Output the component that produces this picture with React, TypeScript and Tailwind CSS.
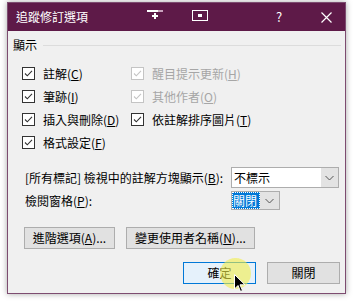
import React from "react";

const font = { fontFamily: '"Noto Sans CJK TC", "Noto Sans", sans-serif' };

function Box({ disabled }: { disabled?: boolean }) {
  const c = disabled ? "#c4c4c4" : "#333333";
  return (
    <svg width="13" height="13" viewBox="0 0 13 13" className="shrink-0">
      <rect x="0.5" y="0.5" width="12" height="12" fill="#ffffff" stroke={c} />
      <path d="M3 6.5 L5.3 8.8 L10 3.8" fill="none" stroke={c} strokeWidth="1.1" />
    </svg>
  );
}

function Check({
  label,
  mn,
  disabled,
}: {
  label: string;
  mn: string;
  disabled?: boolean;
}) {
  return (
    <div className="flex items-center h-[23px]">
      <Box disabled={disabled} />
      <span
        className={`ml-[8px] text-[12px] leading-[16px] whitespace-nowrap ${
          disabled ? "text-[#a6a6a6]" : "text-black"
        }`}
      >
        {label}(<span className="underline">{mn}</span>)
      </span>
    </div>
  );
}

function Chevron() {
  return (
    <svg width="9" height="6" viewBox="0 0 9 6">
      <path d="M0.5 1 L4.5 5 L8.5 1" fill="none" stroke="#555" strokeWidth="1" />
    </svg>
  );
}

function Btn({
  children,
  w,
  primary,
}: {
  children: React.ReactNode;
  w: string;
  primary?: boolean;
}) {
  return (
    <div
      className={`${w} h-[22px] flex items-center justify-center text-[12px] leading-[16px] border ${
        primary
          ? "bg-[#e5f1fb] border-[#0078d7]"
          : "bg-[#e1e1e1] border-[#adadad]"
      }`}
    >
      {children}
    </div>
  );
}

export default function App() {
  return (
    <div className="w-[354px] h-[302px] bg-white pl-[7px] pt-[2px] relative overflow-hidden" style={font}>
      <div className="w-[339px] border border-[#7d4c70] shadow-[0_0_6px_rgba(0,0,0,0.35)]">
        {/* title bar */}
        <div className="h-[28px] bg-[#5e1a48] flex items-center text-white">
          <span className="ml-[8px] text-[12px] leading-[16px] w-[131px]">追蹤修訂選項</span>
          <svg width="17" height="12" viewBox="0 0 17 12" className="mt-[-6px]">
            <rect x="0" y="2" width="11" height="2" fill="#ffffff" />
            <rect x="11" y="2" width="5" height="2" fill="#c9a3bd" />
            <rect x="7" y="5" width="2" height="6" fill="#ffffff" />
            <rect x="5" y="7" width="6" height="2" fill="#ffffff" />
          </svg>
          <svg width="16" height="11" viewBox="0 0 16 11" className="ml-[28px] mt-[-3px]">
            <rect x="0.5" y="0.5" width="15" height="10" fill="none" stroke="#ffffff" />
            <rect x="6" y="4" width="4" height="3" fill="#ffffff" />
          </svg>
          <span className="ml-[68px] text-[13px] leading-[16px]">?</span>
          <svg width="11" height="11" viewBox="0 0 11 11" className="ml-[39px]">
            <path d="M0.5 0.5 L10.5 10.5 M10.5 0.5 L0.5 10.5" stroke="#ffffff" strokeWidth="1.2" />
          </svg>
        </div>

        {/* body */}
        <div className="bg-[#f0f0f0] pt-[6px] pb-[9px] text-black">
          <div className="flex items-center h-[16px] pl-[5px] pr-[4px]">
            <span className="text-[12px] leading-[16px]">顯示</span>
            <div className="flex-1 h-px bg-[#dcdcdc] ml-[6px]" />
          </div>

          <div className="grid grid-cols-[109px_1fr] mt-[9px] pl-[14px]">
            <Check label="註解" mn="C" />
            <Check label="醒目提示更新" mn="H" disabled />
            <Check label="筆跡" mn="I" />
            <Check label="其他作者" mn="O" disabled />
            <Check label="插入與刪除" mn="D" />
            <Check label="依註解排序圖片" mn="T" />
            <Check label="格式設定" mn="F" />
          </div>

          <div className="flex items-center mt-[13px] h-[21px]">
            <span className="ml-[17px] w-[206px] text-[12px] leading-[16px] whitespace-nowrap">
              [所有標記] 檢視中的註解方塊顯示(<span className="underline">B</span>):
            </span>
            <div className="w-[108px] h-[21px] border border-[#adadad] bg-white flex">
              <span className="flex-1 pl-[2px] text-[12px] leading-[19px]">不標示</span>
              <div className="w-[17px] bg-[#e3e3e3] flex items-center justify-center">
                <Chevron />
              </div>
            </div>
          </div>

          <div className="flex items-center mt-[3px] h-[19px]">
            <span className="ml-[17px] w-[206px] text-[12px] leading-[16px]">
              檢閱窗格(<span className="underline">P</span>):
            </span>
            <div className="w-[49px] h-[19px] border border-[#adadad] bg-[#e3e3e3] flex">
              <span className="w-[28px] bg-[#0078d7] text-white text-[12px] leading-[17px] pl-[1px] outline outline-1 outline-dotted outline-[#ffffff] -outline-offset-1">
                關閉
              </span>
              <div className="flex-1 flex items-center justify-center">
                <Chevron />
              </div>
            </div>
          </div>

          <div className="flex mt-[17px] pl-[16px] gap-[11px]">
            <Btn w="w-[91px]">
              進階選項(<span className="underline">A</span>)...
            </Btn>
            <Btn w="w-[129px]">
              變更使用者名稱(<span className="underline">N</span>)...
            </Btn>
          </div>

          <div className="flex justify-end mt-[13px] pr-[5px] gap-[11px]">
            <Btn w="w-[73px]" primary>
              確定
            </Btn>
            <Btn w="w-[73px]">關閉</Btn>
          </div>
        </div>
      </div>

      {/* click highlight + cursor */}
      <div className="absolute left-[220px] top-[258px] w-[31px] h-[31px] rounded-full bg-[#f2ee4a]/60" />
      <svg width="12" height="19" viewBox="0 0 12 19" className="absolute left-[234px] top-[274px]">
        <path
          d="M0.5 0.5 L0.5 15 L4 11.5 L6.5 17.5 L8.5 16.5 L6 10.8 L11 10.8 Z"
          fill="#000000"
          stroke="#ffffff"
          strokeWidth="1"
        />
      </svg>
    </div>
  );
}
